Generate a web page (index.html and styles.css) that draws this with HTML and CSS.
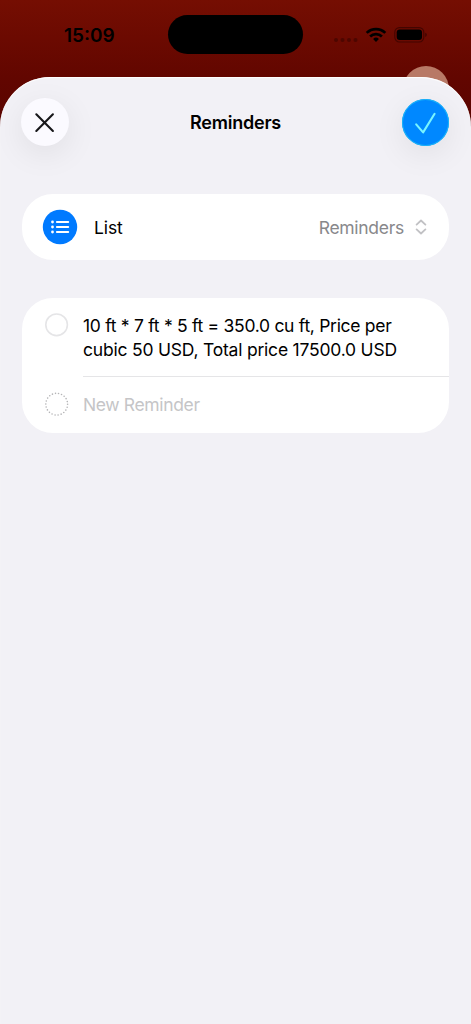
FILE: index.html
```html
<!DOCTYPE html>
<html lang="en">
<head>
<meta charset="utf-8">
<meta name="viewport" content="width=device-width, initial-scale=1">
<title>Reminders</title>
<link rel="stylesheet" href="styles.css">
</head>
<body>
<div class="screen">
  <header class="status">
    <span class="time">15:09</span>
    <div class="island"></div>
    <svg class="indicators" width="96" height="20" viewBox="0 0 96 20">
      <g fill="#4d0600"><circle cx="4" cy="15" r="2"/><circle cx="10.5" cy="15" r="2"/><circle cx="17" cy="15" r="2"/><circle cx="23.5" cy="15" r="2"/></g>
      <g fill="none" stroke="#000" stroke-width="2.7">
        <path d="M34.7 7.9a13.4 13.4 0 0 1 18.6 0"/>
        <path d="M38.1 11.5a8.5 8.5 0 0 1 11.8 0"/>
      </g>
      <path d="M44 17l-2.9-3a4.2 4.2 0 0 1 5.8 0z"/>
      <rect x="62.8" y="2.6" width="29" height="14.4" rx="4.7" fill="none" stroke="#430500" stroke-width="1.1"/>
      <rect x="64.7" y="4.6" width="25.3" height="10.4" rx="3"/>
      <path d="M93.2 7.7q1.7.5 1.7 2.1t-1.7 2.1z" fill="#430500"/>
    </svg>
  </header>
  <div class="avatar"></div>
  <main class="sheet">
    <nav class="bar">
      <button class="round close" aria-label="Close">
        <svg width="48" height="48" viewBox="0 0 48 48"><path d="M15.3 16.3l16.6 16.6M31.9 16.3L15.3 32.9" fill="none" stroke="#17171a" stroke-width="2.1" stroke-linecap="round"/></svg>
      </button>
      <h1 class="title">Reminders</h1>
      <button class="round done" aria-label="Done">
        <svg width="47" height="47" viewBox="0 0 47 47"><path d="M14.2 25.4l6.9 8 11.5-18.6" fill="none" stroke="#78f4ff" stroke-width="2.1" stroke-linecap="round" stroke-linejoin="round"/></svg>
      </button>
    </nav>
    <section class="card picker">
      <svg class="list-icon" width="36" height="36" viewBox="0 0 36 36">
        <circle cx="18" cy="18" r="17.2" fill="#007aff"/>
        <g fill="#fff"><circle cx="10.5" cy="13" r="1.4"/><circle cx="10.5" cy="18" r="1.4"/><circle cx="10.5" cy="23" r="1.4"/></g>
        <path d="M14.9 13h11.3M14.9 18h11.3M14.9 23h11.3" stroke="#fff" stroke-width="2" stroke-linecap="round"/>
      </svg>
      <span class="label">List</span>
      <span class="value">Reminders</span>
      <svg class="chevrons" width="12" height="16" viewBox="0 0 12 16"><path d="M1.6 5.6L6 1.5l4.4 4.1M1.6 10.4L6 14.5l4.4-4.1" fill="none" stroke="#c1c1c4" stroke-width="1.8" stroke-linecap="round" stroke-linejoin="round"/></svg>
    </section>
    <section class="card reminders">
      <div class="item">
        <svg class="check" width="24" height="24" viewBox="0 0 24 24"><circle cx="11.6" cy="11.8" r="10.8" fill="none" stroke="#e5e5e7" stroke-width="1.6"/></svg>
        <p class="text"><span class="line first">10 ft * 7 ft * 5 ft = 350.0 cu ft, Price per</span> <span class="line second">cubic 50 USD, Total price 17500.0 USD</span></p>
      </div>
      <div class="item">
        <svg class="check" width="24" height="24" viewBox="0 0 24 24"><circle cx="11.7" cy="12.2" r="10.9" fill="none" stroke="#b4b4b6" stroke-width="1.6" stroke-linecap="round" stroke-dasharray="0 3.113"/></svg>
        <p class="text new">New Reminder</p>
      </div>
    </section>
  </main>
</div>
</body>
</html>
```
FILE: styles.css
```css
* { box-sizing: border-box; }
body {
  margin: 0;
  font-family: Inter, "Liberation Sans", sans-serif;
  font-size: 17.5px;
  color: #000;
}
.screen {
  position: relative;
  height: 1024px;
  overflow: hidden;
  background: linear-gradient(#750e02 0, #620600 77px, #580400 130px);
}
.status {
  display: grid;
  grid-template-columns: 168px 135px 1fr;
  height: 77px;
  padding-top: 15px;
  align-items: start;
}
.time {
  padding: 9px 0 0 64px;
  font-size: 19px;
  font-weight: 600;
  line-height: 24px;
}
.island { height: 39px; border-radius: 20px; background: #000; }
.indicators { margin: 10px 0 0 29px; }
.avatar {
  position: absolute;
  left: 403px;
  top: 66px;
  width: 46px;
  height: 46px;
  border-radius: 50%;
  background: #b87966;
}
.sheet {
  position: relative;
  height: 947px;
  padding: 21px 22px 0;
  border-radius: 50px 50px 0 0;
  background: #f2f1f6;
  box-shadow: inset 0 1px 1px #fff;
}
.bar { display: flex; align-items: center; justify-content: space-between; height: 48px; }
.round {
  width: 48px;
  height: 48px;
  padding: 0;
  border: 0;
  border-radius: 50%;
  box-shadow: 0 8px 32px rgba(0, 0, 0, .08);
}
.round svg { display: block; }
.close { margin-left: -1px; background: #fbfaff; }
.done { width: 47px; height: 47px; background: #0088ff; box-shadow: inset 0 0 0 1px #19b4f8, 0 8px 32px rgba(0, 0, 0, .08); }
.title { margin: 0; padding-top: 2px; font-size: 18px; font-weight: 600; line-height: 24px; letter-spacing: -.22px; }
.card { background: #fff; border-radius: 31px; }
.picker {
  display: flex;
  align-items: center;
  height: 66px;
  margin-top: 48px;
  padding: 0 22px 0 20px;
}
.label { margin-left: 16px; padding-top: 2px; line-height: 24px; letter-spacing: -.1px; }
.value { margin-left: auto; padding-top: 2px; line-height: 24px; color: #88888b; letter-spacing: -.28px; }
.chevrons { margin-left: 11px; }
.reminders { height: 135px; margin-top: 38px; }
.item { display: flex; padding-left: 23px; }
.check { flex: none; margin-top: 15px; }
.text { flex: 1; height: 79px; margin: 0 0 0 14px; padding-top: 16px; line-height: 24px; border-bottom: 1px solid #e5e5e7; }
.line { display: block; white-space: nowrap; }
.first { letter-spacing: -.29px; }
.second { letter-spacing: -.21px; }
.new { height: 56px; border: 0; color: #c5c5c7; letter-spacing: -.36px; }
```
